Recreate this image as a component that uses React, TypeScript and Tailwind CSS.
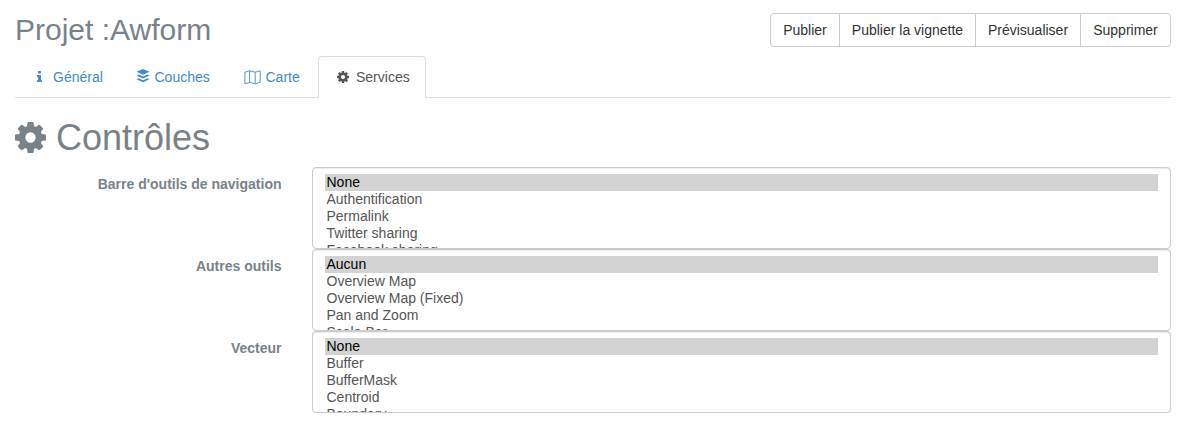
import React from "react";

const COG =
  "M1024 896q0-106-75-181t-181-75-181 75-75 181 75 181 181 75 181-75 75-181zm512-109v222q0 12-8 23t-20 13l-185 28q-19 54-39 91 35 50 107 138 10 12 10 25t-9 23q-27 37-99 108t-94 71q-12 0-26-9l-138-108q-44 23-91 38-16 136-29 186-7 28-36 28h-222q-14 0-24.5-8.5t-11.5-21.5l-28-184q-49-16-90-37l-141 107q-10 9-25 9-14 0-25-11-126-114-165-168-7-10-7-23 0-12 8-23 15-21 51-66.5t54-70.5q-27-50-41-99l-183-27q-13-2-21-12.5t-8-23.5v-222q0-12 8-23t19-13l186-28q14-46 39-92-40-57-107-138-10-12-10-24 0-10 9-23 26-36 98.5-107.5t94.5-71.5q13 0 26 10l138 107q44-23 91-38 16-136 29-186 7-28 36-28h222q14 0 24.5 8.5t11.5 21.5l28 184q49 16 90 37l142-107q9-9 24-9 13 0 25 10 129 119 165 170 7 8 7 22 0 12-8 23-15 21-51 66.5t-54 70.5q26 50 41 98l183 28q13 2 21 12.5t8 23.5z";

function CogIcon({ className }: { className: string }) {
  return (
    <svg viewBox="0 128 1536 1536" className={className} fill="currentColor">
      <path d={COG} />
    </svg>
  );
}

function InfoIcon() {
  return (
    <svg viewBox="0 128 640 1408" className="h-[11px] w-[5px]" fill="currentColor">
      <path d="M640 1344v128q0 26-19 45t-45 19h-512q-26 0-45-19t-19-45v-128q0-26 19-45t45-19h64v-384h-64q-26 0-45-19t-19-45v-128q0-26 19-45t45-19h384q26 0 45 19t19 45v576h64q26 0 45 19t19 45zm-128-1152v192q0 26-19 45t-45 19h-256q-26 0-45-19t-19-45v-192q0-26 19-45t45-19h256q26 0 45 19t19 45z" />
    </svg>
  );
}

function LayersIcon() {
  return (
    <svg viewBox="0 0 14 14" className="h-3.5 w-3.5" fill="currentColor">
      <path d="M7 0 13.5 2.8 7 5.8.5 2.8Z" />
      <path d="M.5 6.4 2.7 5.4 7 7.4l4.3-2 2.2 1L7 9.5Z" />
      <path d="M.5 10.2l2.2-1L7 11.2l4.3-2 2.2 1L7 13.3Z" />
    </svg>
  );
}

function MapIcon() {
  return (
    <svg viewBox="0 0 17 15" className="h-[15px] w-[17px]" fill="none" stroke="currentColor" strokeWidth="0.9" strokeLinejoin="round">
      <path d="M.9 2.2 5.6.8l5.6 1.4L16.2.8v11.6l-5 1.4-5.6-1.4-4.7 1.4ZM5.6.8v11.6M11.2 2.2v11.6" />
    </svg>
  );
}

const actions = [
  { label: "Publier", width: "w-[70px]" },
  { label: "Publier la vignette", width: "w-[137px]" },
  { label: "Prévisualiser", width: "w-[106px]" },
  { label: "Supprimer", width: "w-[91px]" },
];

const fields = [
  { label: "Barre d'outils de navigation", options: ["None", "Authentification", "Permalink", "Twitter sharing", "Facebook sharing"] },
  { label: "Autres outils", options: ["Aucun", "Overview Map", "Overview Map (Fixed)", "Pan and Zoom", "Scale Bar"] },
  { label: "Vecteur", options: ["None", "Buffer", "BufferMask", "Centroid", "Boundary"] },
];

export default function App() {
  return (
    <div className="h-[427px] overflow-hidden bg-white px-[15px] pr-[13px] font-['Liberation_Sans',Arial,sans-serif] text-sm leading-5 text-[#798288]">
      <header className="flex h-14 items-start justify-between">
        <h2 className="pt-[13px] text-[30px] leading-[33px]">Projet :Awform</h2>
        <div className="mt-[13px] flex text-[#333]">
          {actions.map((a) => (
            <button
              key={a.label}
              type="button"
              className={`${a.width} -ml-px h-[34px] border border-[#ccc] bg-white text-center whitespace-nowrap first:ml-0 first:rounded-l last:rounded-r`}
            >
              {a.label}
            </button>
          ))}
        </div>
      </header>

      <nav className="flex h-[42px] border-b border-[#ddd] text-[#428bca]">
        <a className="flex h-[42px] w-[104px] items-center pl-4">
          <span className="mb-px flex w-[17px] justify-center">
            <InfoIcon />
          </span>
          <span className="ml-[5px]">Général</span>
        </a>
        <a className="flex h-[42px] w-[107px] items-center pl-[17px]">
          <span className="mb-[3px]">
            <LayersIcon />
          </span>
          <span className="ml-[4.5px]">Couches</span>
        </a>
        <a className="flex h-[42px] w-[92px] items-center pl-[18px]">
          <MapIcon />
          <span className="ml-[4.5px]">Carte</span>
        </a>
        <a className="flex h-[42px] w-[108px] items-center rounded-t border border-b-0 border-[#ddd] bg-white pb-px pl-[15px] text-[#555]">
          <span className="flex w-[18px] justify-center">
            <CogIcon className="h-3 w-3" />
          </span>
          <span className="ml-1">Services</span>
        </a>
      </nav>

      <h1 className="mt-5 flex h-10 items-center text-[36px] leading-10">
        <CogIcon className="mb-0.5 h-[31px] w-[31px]" />
        <span className="ml-2.5">Contrôles</span>
      </h1>

      <form className="mt-[9px]">
        {fields.map((f) => (
          <div key={f.label} className="flex">
            <label className="w-[297px] pt-[7px] pr-[30.5px] text-right font-bold">{f.label}</label>
            <ul className="h-[82px] flex-1 overflow-hidden rounded border border-[#ccc] px-3 pt-1.5 text-[#555] shadow-[inset_0_1px_1px_rgba(0,0,0,0.075)]">
              {f.options.map((o) => (
                <li key={o} className="h-[17px] pl-[1.5px] leading-[17px] first:bg-[#d3d3d3] first:text-black">
                  {o}
                </li>
              ))}
            </ul>
          </div>
        ))}
      </form>
    </div>
  );
}
